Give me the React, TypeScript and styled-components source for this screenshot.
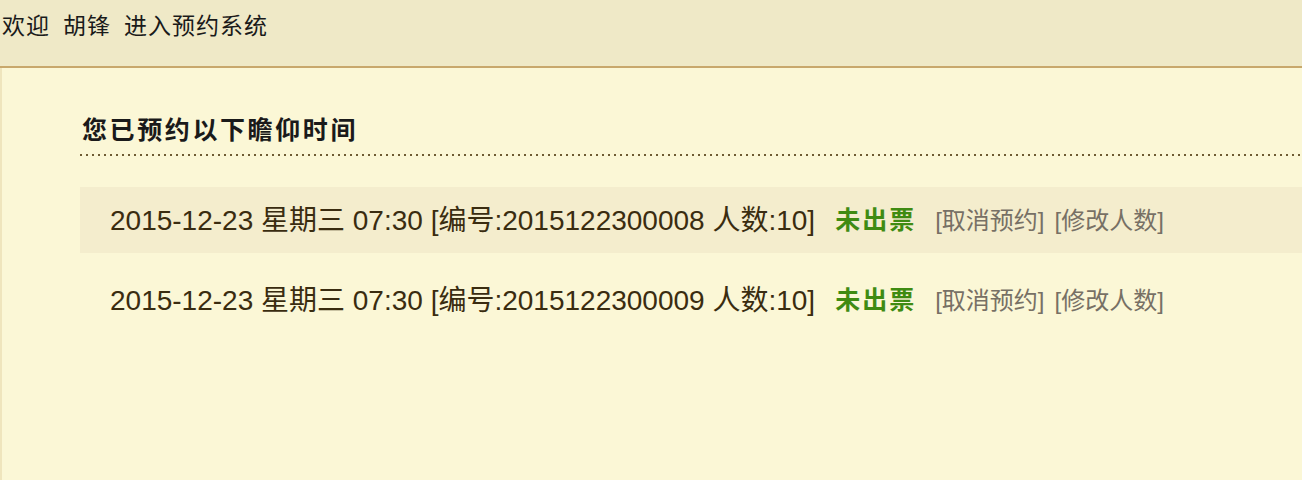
import React from "react";
import styled, { createGlobalStyle } from "styled-components";

const Global = createGlobalStyle`
  html, body { margin: 0; padding: 0; }
  body {
    background: #fbf7d6;
    font-family: "Liberation Sans", "Noto Sans CJK SC", sans-serif;
    color: #3a2c10;
  }
`;

const Page = styled.div`
  display: flex;
  flex-direction: column;
  min-height: 480px;
`;

const TopBar = styled.header`
  height: 66px;
  background: #efe9c7;
  border-bottom: 2px solid #c8a86c;
  box-sizing: content-box;
  display: flex;
  align-items: flex-start;
  padding-left: 2px;
  font-family: "Noto Sans CJK SC", sans-serif;
  font-size: 23px;
  line-height: 48px;
  letter-spacing: 1px;
  color: #1a1a1a;
  gap: 13px;
`;

const Main = styled.main`
  flex: 1;
  border-left: 2px solid #efe5bd;
  padding: 40px 0 0 78px;
`;

const Title = styled.h2`
  margin: 0;
  font-family: "Noto Sans CJK SC", sans-serif;
  font-weight: 700;
  font-size: 25px;
  line-height: 40px;
  letter-spacing: 2.6px;
  color: #1a1a1a;
  padding-bottom: 8px;
  background-image: linear-gradient(to right, #6e5b33 0, #6e5b33 2px, transparent 2px);
  background-size: 6px 2px;
  background-repeat: repeat-x;
  background-position: 0 100%;
  padding-left: 2px;
`;

const List = styled.div`
  margin-top: 31px;
  display: flex;
  flex-direction: column;
  gap: 14px;
`;

const Row = styled.div<{ $shaded: boolean }>`
  height: 66px;
  box-sizing: border-box;
  padding-bottom: 4px;
  display: flex;
  align-items: center;
  padding-left: 30px;
  background: ${(p) => (p.$shaded ? "#f4edcd" : "transparent")};
  white-space: nowrap;
`;

const Info = styled.span`
  font-size: 28px;
  color: #3a2c10;
`;

const Status = styled.span`
  margin-left: 20px;
  font-family: "Noto Sans CJK SC", sans-serif;
  font-weight: 700;
  font-size: 25px;
  letter-spacing: 2px;
  color: #3f8b12;
`;

const Action = styled.a`
  margin-left: 19px;
  color: #777065;
  font-size: 24px;
  text-decoration: none;
  cursor: pointer;
  & + & { margin-left: 10px; }
`;

const rows = [
  { no: "2015122300008" },
  { no: "2015122300009" },
];

export default function App() {
  return (
    <Page>
      <Global />
      <TopBar>
        <span>欢迎</span>
        <span>胡锋</span>
        <span>进入预约系统</span>
      </TopBar>
      <Main>
        <Title>您已预约以下瞻仰时间</Title>
        <List>
          {rows.map((r, i) => (
            <Row key={r.no} $shaded={i % 2 === 0}>
              <Info>2015-12-23 星期三 07:30 [编号:{r.no} 人数:10]</Info>
              <Status>未出票</Status>
              <Action>[取消预约]</Action>
              <Action>[修改人数]</Action>
            </Row>
          ))}
        </List>
      </Main>
    </Page>
  );
}
